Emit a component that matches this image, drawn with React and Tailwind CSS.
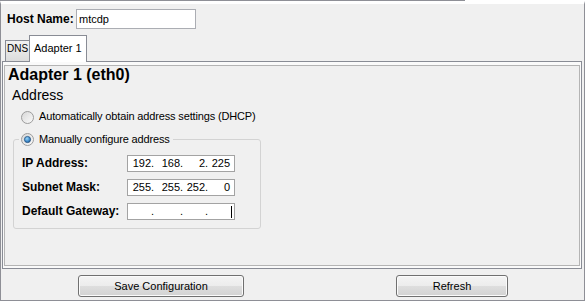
function Radio({ checked, id }) {
  return (
    <svg width="13" height="13" viewBox="0 0 13 13" className="shrink-0">
      <defs>
        <linearGradient id={`rf-${id}`} x1="0" y1="0" x2="1" y2="1">
          <stop offset="0" stopColor="#d6d6d6" />
          <stop offset="1" stopColor="#fcfcfc" />
        </linearGradient>
        <radialGradient id={`rd-${id}`} cx="0.4" cy="0.35" r="0.75">
          <stop offset="0" stopColor="#9ad6f8" />
          <stop offset="0.6" stopColor="#3f8bcb" />
          <stop offset="1" stopColor="#1b4f86" />
        </radialGradient>
      </defs>
      <circle cx="6.5" cy="6.5" r="6" fill={`url(#rf-${id})`} stroke="#9c9c9c" strokeWidth="1" />
      {checked && (
        <circle cx="6.5" cy="6.5" r="3.1" fill={`url(#rd-${id})`} stroke="#23507f" strokeWidth="0.8" />
      )}
    </svg>
  );
}

function IpField({ values, caret }) {
  const widths = ["w-[23px]", "w-[26px]", "w-[22px]", "w-[22px]"];
  return (
    <div className="w-[108px] h-[17px] border border-[#a3a3a3] bg-white flex items-center text-[11px] leading-[15px]">
      {values.map((v, i) => (
        <div key={i} className="flex">
          <span className={`${widths[i]} text-right`}>{v}</span>
          {i < 3 && <span className="w-[3px] text-center">.</span>}
        </div>
      ))}
      {caret && <span className="w-px h-[12px] bg-black ml-px" />}
    </div>
  );
}

function Row({ label, values, caret }) {
  return (
    <div className="flex items-center h-[17px] pl-[3px]">
      <div className="w-[105px] text-[12px] font-bold leading-[17px]">{label}</div>
      <IpField values={values} caret={caret} />
    </div>
  );
}

const btn =
  "h-[22px] border border-[#707070] rounded-[3px] bg-[linear-gradient(to_bottom,#f4f4f4_0%,#ececec_50%,#dedede_51%,#d2d2d2_100%)] shadow-[inset_0_0_0_1px_#fbfbfb] flex items-center justify-center text-[11px] leading-[14px]";

export default function App() {
  return (
    <div className="w-[585px] h-[302px] bg-white font-['Liberation_Sans',Arial,sans-serif] text-black overflow-hidden">
      <div className="flex h-px">
        <div className="w-[465px] bg-[#8e8f96]" />
      </div>
      <div className="h-[300px] border-x border-b border-[#8e8f96] border-t-[3px] border-t-white bg-[#f0f0f0] flex flex-col">
        {/* Host row */}
        <div className="flex items-center h-[20px] mt-[5px] pl-[6px]">
          <div className="w-[69px] text-[12px] font-bold leading-[20px]">Host Name:</div>
          <div className="w-[120px] h-[20px] border border-[#abadb3] bg-white flex items-center pl-[2px] text-[11px]">
            mtcdp
          </div>
        </div>

        {/* Tabs */}
        <div className="flex items-end h-[26px] mt-[6px] pl-[4px]">
          <div className="w-[24px] h-[21px] border-l border-t border-[#898c95] bg-[linear-gradient(to_bottom,#f2f2f2,#dcdcdc)] text-[10px] leading-[12px] pt-[2px] text-center">
            DNS
          </div>
          <div className="relative z-10 w-[58px] h-[27px] -mb-px border-x border-t border-[#898c95] bg-white text-[11px] leading-[13px] pt-[6px] pl-[4px]">
            Adapter 1
          </div>
        </div>

        {/* Panel */}
        <div className="ml-[1px] w-[580px] h-[208px] border border-[#898c95] bg-[#fafafa] pt-[3px] pb-[2px] px-[1px] flex flex-col">
          <div className="flex-1 border border-[#b4b4b4] bg-[#f0f0f0] flex flex-col">
            <div className="pl-[3px] text-[16px] font-bold leading-[18px]">Adapter 1 (eth0)</div>
            <div className="mt-[3px] pl-[7px] text-[14px] leading-[16px]">Address</div>
            <div className="mt-[5px] pl-[16px] flex items-start h-[16px]">
              <div className="mt-[3px]">
                <Radio id="a" />
              </div>
              <span className="ml-[5px] text-[11px] leading-[16px] tracking-[-0.15px]">
                Automatically obtain address settings (DHCP)
              </span>
            </div>

            <fieldset className="mt-[7px] ml-[8px] w-[248px] border border-[#d3d3d3] rounded-[3px] pl-[5px] pb-[8px]">
              <legend className="flex items-center h-[16px] pl-[2px] pr-[3px]">
                <Radio id="b" checked />
                <span className="ml-[5px] text-[11px] leading-[16px] tracking-[-0.15px]">
                  Manually configure address
                </span>
              </legend>
              <div className="mt-[8px] flex flex-col gap-[7px]">
                <Row label="IP Address:" values={["192", "168", "2", "225"]} />
                <Row label="Subnet Mask:" values={["255", "255", "252", "0"]} />
                <Row label="Default Gateway:" values={["", "", "", ""]} caret />
              </div>
            </fieldset>
          </div>
        </div>

        {/* Buttons */}
        <div className="flex mt-[6px]">
          <div className={`${btn} ml-[77px] w-[166px]`}>Save Configuration</div>
          <div className={`${btn} ml-[152px] w-[112px]`}>Refresh</div>
        </div>
      </div>
    </div>
  );
}
